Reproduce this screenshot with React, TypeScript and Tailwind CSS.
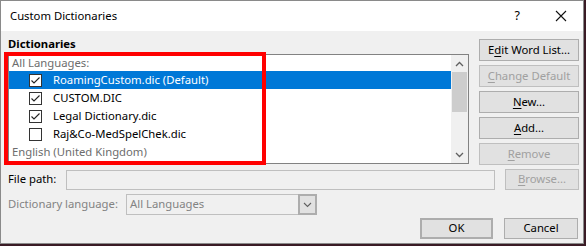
import React from 'react';

const font = { fontFamily: '"Segoe UI", "Noto Sans", sans-serif' };

const CheckBox = ({ checked }: { checked: boolean }) => (
  <span className="w-[13px] h-[13px] border border-[#333333] bg-white flex items-center justify-center shrink-0">
    {checked && (
      <svg width="11" height="11" viewBox="0 0 11 11">
        <path d="M1.5 5.5 L4 8 L9.5 2.5" fill="none" stroke="#222" strokeWidth="1.1" />
      </svg>
    )}
  </span>
);

interface BtnProps {
  label: React.ReactNode;
  disabled?: boolean;
  className?: string;
}

const Btn = ({ label, disabled, className }: BtnProps) => (
  <div
    className={`h-[21px] flex items-center justify-center border ${
      disabled
        ? 'border-[#bfbfbf] bg-[#e1e1e1] text-[#a0a0a0]'
        : 'border-[#adadad] bg-[#e1e1e1] text-black'
    } ${className ?? ''}`}
  >
    {label}
  </div>
);

const u = (s: string) => <span className="underline underline-offset-[2px]">{s}</span>;

const dicts = [
  { name: 'RoamingCustom.dic (Default)', checked: true, selected: true },
  { name: 'CUSTOM.DIC', checked: true },
  { name: 'Legal Dictionary.dic', checked: true },
  { name: 'Raj&Co-MedSpelChek.dic', checked: false },
];

export default function App() {
  return (
    <div className="w-[586px] h-[246px] bg-[#3a1b25] overflow-hidden text-[11.3px]" style={font}>
      <div className="relative w-[584px] h-[244px] bg-[#f0f0f0] border border-[#8a8a8a] flex flex-col">
        {/* title bar */}
        <div className="h-[30px] bg-white flex items-center pl-[9px] text-black shrink-0">
          <span>Custom Dictionaries</span>
          <span className="ml-auto mr-[35px] text-[12.5px]">?</span>
          <svg width="12" height="12" viewBox="0 0 12 12" className="mr-[16px]">
            <path d="M1 1 L11 11 M11 1 L1 11" stroke="#111" strokeWidth="1.1" />
          </svg>
        </div>

        <div className="flex pl-[7px] pt-[6px]">
          <div className="w-[461px] flex flex-col">
            <div className="h-[17px] font-bold leading-[14px]">Dictionaries</div>
            <div className="h-[110px] border border-[#828282] bg-white flex">
              <div className="flex-1 flex flex-col">
                <div className="h-[16px] pl-[3px] text-[#6d6d6d] leading-[16px]">All Languages:</div>
                {dicts.map((d) => (
                  <div
                    key={d.name}
                    className={`h-[18px] flex items-center pl-[20px] ${
                      d.selected ? 'bg-[#0078d7] text-white' : 'text-black'
                    }`}
                  >
                    <CheckBox checked={d.checked} />
                    <span className="ml-[11px]">{d.name}</span>
                  </div>
                ))}
                <div className="h-[18px] pl-[3px] text-[#6d6d6d] leading-[18px]">English (United Kingdom)</div>
              </div>
              <div className="w-[17px] bg-[#f0f0f0] flex flex-col items-center">
                <svg width="9" height="6" viewBox="0 0 9 6" className="mt-[6px]">
                  <path d="M1 5 L4.5 1.5 L8 5" fill="none" stroke="#606060" strokeWidth="1.3" />
                </svg>
                <div className="w-[15px] h-[40px] bg-[#cdcdcd] mt-[5px]" />
                <svg width="9" height="6" viewBox="0 0 9 6" className="mt-auto mb-[5px]">
                  <path d="M1 1 L4.5 4.5 L8 1" fill="none" stroke="#606060" strokeWidth="1.3" />
                </svg>
              </div>
            </div>
          </div>
          <div className="w-[100px] ml-[10px] mt-[2px] flex flex-col gap-[4px]">
            <Btn className="h-[22px]" label={<>E{u('d')}it Word List...</>} />
            <Btn className="h-[22px]" disabled label={<>{u('C')}hange Default</>} />
            <Btn className="h-[22px]" label={<>{u('N')}ew...</>} />
            <Btn className="h-[22px]" label={<>{u('A')}dd...</>} />
            <Btn className="h-[22px]" disabled label={<>{u('R')}emove</>} />
          </div>
        </div>

        <div className="flex items-center pl-[7px] mt-[4px] h-[21px]">
          <span className="w-[58px]">File path:</span>
          <div className="w-[429px] h-[20px] border border-[#bfbfbf] bg-[#f0f0f0]" />
          <Btn disabled className="w-[74px] ml-[10px]" label={<>{u('B')}rowse...</>} />
        </div>

        <div className="flex items-center pl-[7px] mt-[4px] h-[21px]">
          <span className="w-[118px] text-[#838383]">Dictionary language:</span>
          <div className="w-[191px] h-[21px] border border-[#bfbfbf] bg-[#f0f0f0] flex items-center">
            <span className="pl-[3px] text-[#838383] flex-1">All Languages</span>
            <div className="w-[19px] h-[21px] border-2 border-[#adadad] bg-[#e1e1e1] flex items-center justify-center -mr-px">
              <svg width="9" height="6" viewBox="0 0 9 6">
                <path d="M1 1 L4.5 4.5 L8 1" fill="none" stroke="#606060" strokeWidth="1.1" />
              </svg>
            </div>
          </div>
        </div>

        <div className="flex justify-end pr-[5px] mt-[3px] gap-[11px]">
          <Btn className="w-[73px] border-2 border-[#0078d7]" label="OK" />
          <Btn className="w-[74px]" label="Cancel" />
        </div>

        {/* red highlight annotation */}
        <div className="absolute left-[3px] top-[51px] w-[262px] h-[113px] border-4 border-[#ff0000] pointer-events-none" />
      </div>
    </div>
  );
}
